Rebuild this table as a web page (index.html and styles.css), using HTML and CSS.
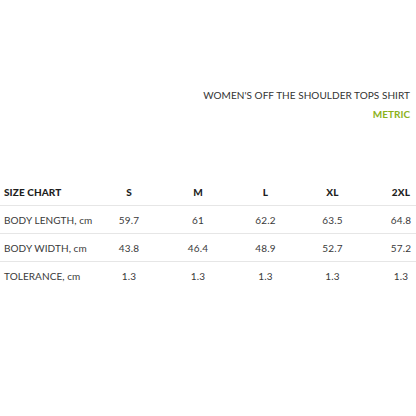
FILE: index.html
```html
<!DOCTYPE html>
<html>
<head>
<meta charset="utf-8">
<link rel="stylesheet" href="styles.css">
</head>
<body>
<div class="page">
  <div class="heading">
    <div class="title">WOMEN'S OFF THE SHOULDER TOPS SHIRT</div>
    <div class="unit">METRIC</div>
  </div>
  <div class="chart">
    <div class="row head">
      <div class="label">SIZE CHART</div>
      <div class="cell">S</div>
      <div class="cell">M</div>
      <div class="cell">L</div>
      <div class="cell">XL</div>
      <div class="cell last">2XL</div>
    </div>
    <div class="row">
      <div class="label">BODY LENGTH, cm</div>
      <div class="cell">59.7</div>
      <div class="cell">61</div>
      <div class="cell">62.2</div>
      <div class="cell">63.5</div>
      <div class="cell last">64.8</div>
    </div>
    <div class="row">
      <div class="label">BODY WIDTH, cm</div>
      <div class="cell">43.8</div>
      <div class="cell">46.4</div>
      <div class="cell">48.9</div>
      <div class="cell">52.7</div>
      <div class="cell last">57.2</div>
    </div>
    <div class="row noline">
      <div class="label">TOLERANCE, cm</div>
      <div class="cell">1.3</div>
      <div class="cell">1.3</div>
      <div class="cell">1.3</div>
      <div class="cell">1.3</div>
      <div class="cell last">1.3</div>
    </div>
  </div>
</div>
</body>
</html>
```
FILE: styles.css
```css
html, body {
  margin: 0;
  padding: 0;
  background: #ffffff;
}
.page {
  width: 416px;
  height: 416px;
  font-family: "Lato", "Liberation Sans", sans-serif;
  color: #3a3a3a;
  font-size: 10px;
}
.heading {
  padding: 86px 6px 0 0;
  text-align: right;
  line-height: 19px;
}
.title {
  letter-spacing: 0.05px;
  color: #333;
}
.unit {
  color: #8cb21c;
  font-weight: 700;
  letter-spacing: 0;
}
.chart {
  margin-top: 54px;
}
.row {
  display: grid;
  grid-template-columns: 94px 70px 68px 67px 67px 50px;
  height: 27px;
  align-items: center;
  border-bottom: 1px solid #e6e6e6;
}
.row.noline {
  border-bottom: none;
}
.row.head {
  font-weight: 900;
  color: #1e1e1e;
}
.label {
  padding-left: 4px;
  letter-spacing: 0.07px;
  white-space: nowrap;
}
.row.head .label {
  letter-spacing: 0.1px;
}
.cell {
  text-align: center;
  letter-spacing: 0.2px;
}
.cell.last {
  padding-left: 20px;
}
```
